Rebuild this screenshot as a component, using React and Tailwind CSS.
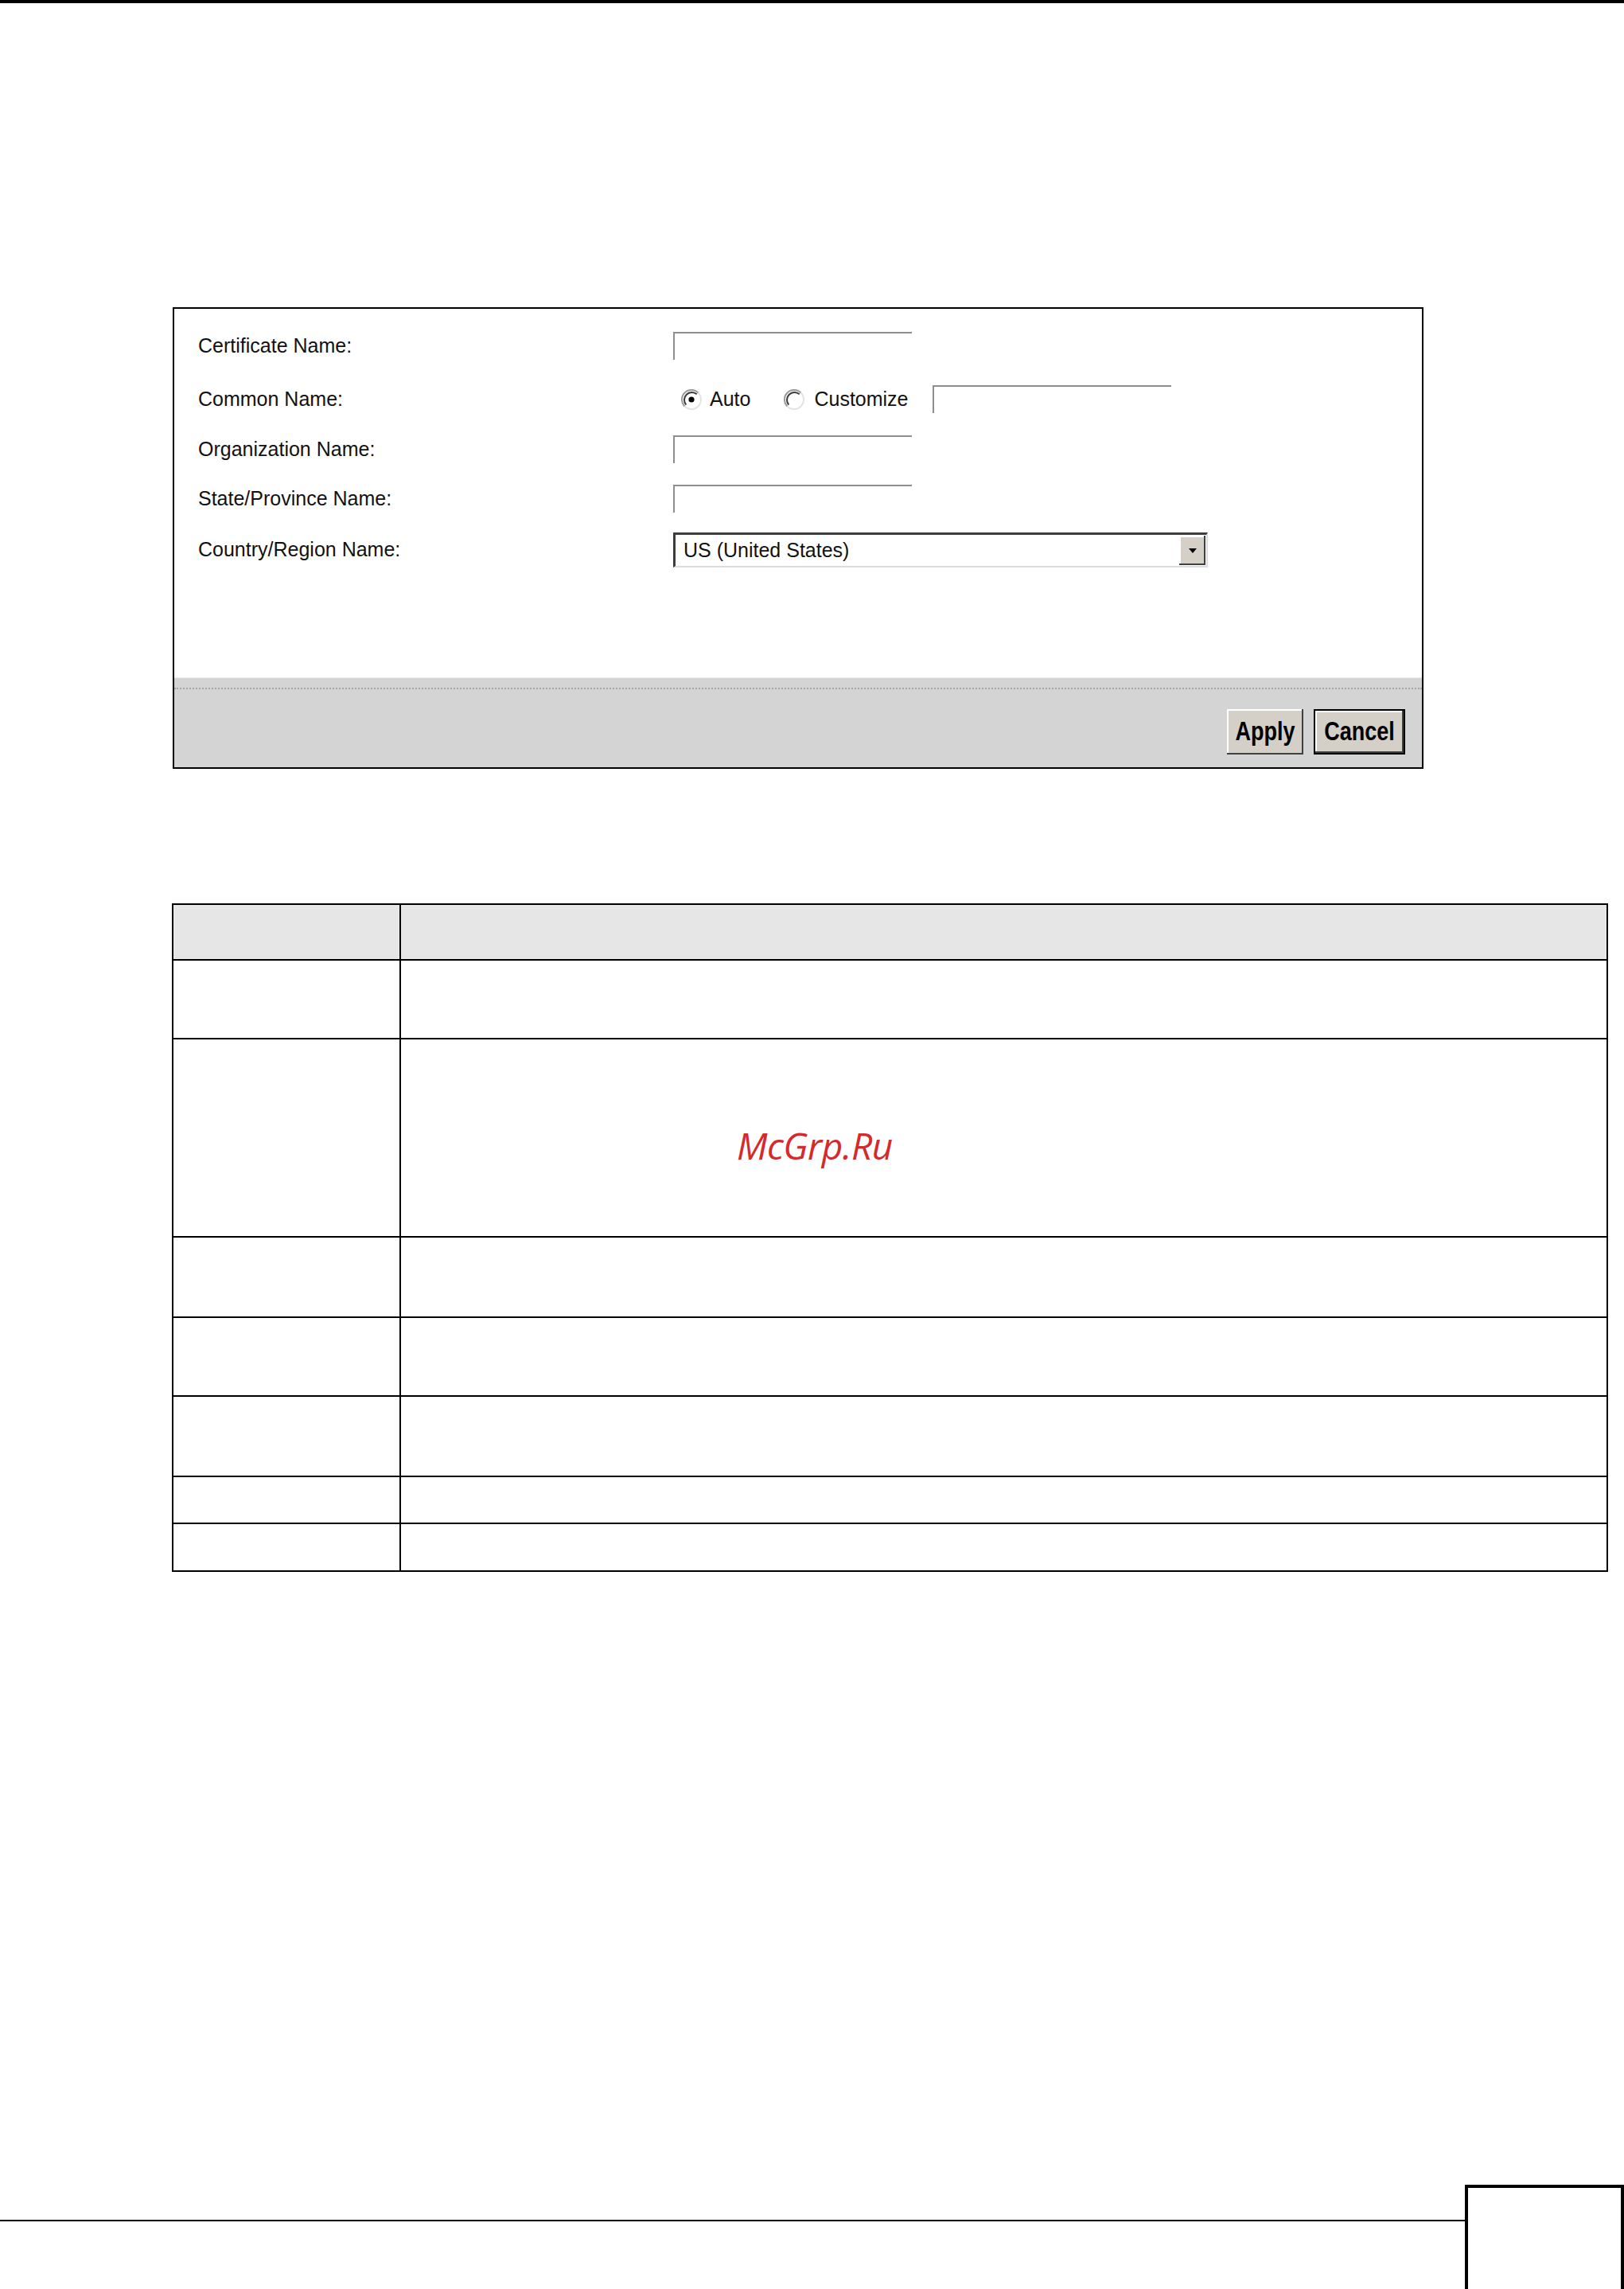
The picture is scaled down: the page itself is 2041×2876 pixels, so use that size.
import React from 'react';

const Radio = ({ checked }) => (
  <svg width="26" height="26" viewBox="0 0 26 26" className="shrink-0">
    <circle cx="13" cy="13" r="11" fill="#ffffff" />
    <path d="M4.5 21.5 A12 12 0 0 1 21.5 4.5" stroke="#9a9a9a" strokeWidth="2" fill="none" />
    <path d="M6.3 19.7 A9.5 9.5 0 0 1 19.7 6.3" stroke="#3a3a3a" strokeWidth="2" fill="none" />
    <path d="M21.5 4.5 A12 12 0 0 1 4.5 21.5" stroke="#e4e4e4" strokeWidth="2" fill="none" />
    {checked && <circle cx="13" cy="13" r="3.6" fill="#000000" />}
  </svg>
);

const TextBox = ({ className = '' }) => (
  <div className={'h-[35px] w-[300px] border-t-2 border-l-2 border-[#8e8e8e] bg-white ' + className}></div>
);

const rows = [
  { h: 'h-[70px]', head: true },
  { h: 'h-[99px]' },
  { h: 'h-[249px]' },
  { h: 'h-[101px]' },
  { h: 'h-[99px]' },
  { h: 'h-[101px]' },
  { h: 'h-[59px]' },
  { h: 'h-[60px]' },
];

const App = () => {
  return (
    <div className="relative w-[2041px] h-[2876px] bg-white flex flex-col font-['Liberation_Sans',Arial,sans-serif] text-[#111] overflow-hidden">
      <div className="h-[4px] w-full bg-black"></div>

      {/* certificate form */}
      <div id="form" className="ml-[217px] mt-[382px] w-[1572px] h-[580px] border-2 border-black flex flex-col">
        <div className="flex-1 pt-[29px] pl-[30px]">
          <div className="flex items-center h-[35px]">
            <div className="w-[597px] text-[25px]">Certificate Name:</div>
            <TextBox />
          </div>

          <div className="flex items-center h-[35px] mt-[32px]">
            <div className="w-[597px] text-[25px]">Common Name:</div>
            <div className="flex items-center pl-[10px] text-[25px]">
              <Radio checked />
              <span className="ml-[10px]">Auto</span>
              <span className="ml-[42px]"><Radio /></span>
              <span className="ml-[12px]">Customize</span>
              <TextBox className="ml-[30px]" />
            </div>
          </div>

          <div className="flex items-center h-[35px] mt-[28px]">
            <div className="w-[597px] text-[25px]">Organization Name:</div>
            <TextBox />
          </div>

          <div className="flex items-center h-[35px] mt-[27px]">
            <div className="w-[597px] text-[25px]">State/Province Name:</div>
            <TextBox />
          </div>

          <div className="flex items-center h-[44px] mt-[25px]">
            <div className="w-[597px] text-[25px]">Country/Region Name:</div>
            <div className="w-[672px] h-[44px] flex items-center border-t-[3px] border-l-[3px] border-[#3c3c3c] border-b-2 border-r-2 border-b-[#dcdcdc] border-r-[#dcdcdc] bg-white">
              <span className="flex-1 pl-[10px] text-[25px] leading-none">US (United States)</span>
              <div className="w-[33px] h-[37px] mr-[1px] flex items-center justify-center bg-[#d4d0c8] shadow-[inset_-2px_-2px_0_#404040,inset_2px_2px_0_#ffffff]">
                <svg width="10" height="6" viewBox="0 0 10 6"><path d="M0 0 H10 L5 6 Z" fill="#000" /></svg>
              </div>
            </div>
          </div>
        </div>

        <div className="h-[113px] bg-[#d4d4d4] border-t border-[#ececec] flex flex-col">
          <div className="mt-[12px] border-t-2 border-dotted border-[#a6a6a6]"></div>
          <div className="flex justify-end gap-[13px] pr-[21px] mt-[25px]">
            <button className="w-[96px] h-[57px] bg-[#d4d0c8] shadow-[inset_-2px_-2px_0_#404040,inset_2px_2px_0_#ffffff] text-[27px] font-bold text-black">
              <span className="inline-block scale-y-125">Apply</span>
            </button>
            <button className="w-[115px] h-[57px] bg-[#d4d0c8] border-2 border-black shadow-[inset_-2px_-2px_0_#404040,inset_2px_2px_0_#ffffff] text-[27px] font-bold text-black">
              <span className="inline-block scale-y-125">Cancel</span>
            </button>
          </div>
        </div>
      </div>

      {/* description table */}
      <div id="table" className="ml-[216px] mt-[169px] w-[1805px] border-t-2 border-l-2 border-r-2 border-black">
        {rows.map((r, i) => (
          <div key={i} className={'flex border-b-2 border-black ' + r.h + (r.head ? ' bg-[#e6e6e6]' : '')}>
            <div className="w-[286px] border-r-2 border-black"></div>
            <div className="flex-1"></div>
          </div>
        ))}
      </div>

      <div className="absolute left-[926px] top-[1416px] font-['Open_Sans',sans-serif] italic text-[46px] leading-none tracking-[-0.5px] text-[#d42a2e]">
        McGrp.Ru
      </div>

      {/* page footer */}
      <div className="mt-auto flex items-start h-[131px]">
        <div className="flex-1 h-[2px] mt-[44px] bg-black"></div>
        <div className="w-[200px] h-[135px] border-4 border-black"></div>
      </div>
    </div>
  );
};

export default App;
